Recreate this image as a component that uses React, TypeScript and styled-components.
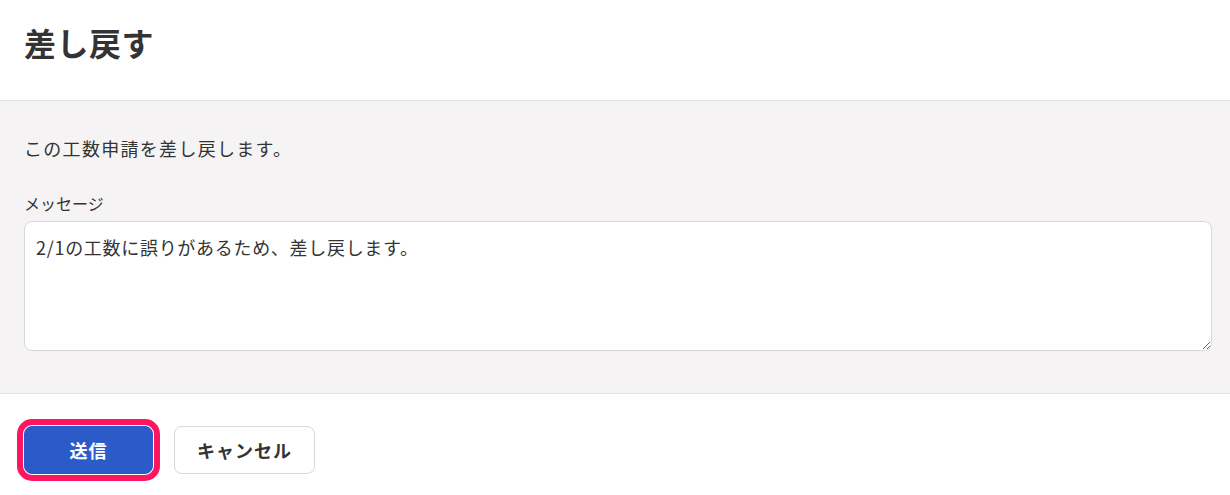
import React from "react";
import styled, { createGlobalStyle } from "styled-components";

const GlobalStyle = createGlobalStyle`
  html, body {
    margin: 0;
    padding: 0;
    background: #ffffff;
  }
  body {
    font-family: "Noto Sans CJK JP", "Noto Sans", sans-serif;
    color: #333333;
  }
  * {
    box-sizing: border-box;
  }
`;

const Dialog = styled.div`
  width: 1230px;
  display: flex;
  flex-direction: column;
`;

const Header = styled.header`
  height: 101px;
  padding: 18px 24px 0;
  border-bottom: 1px solid #e3e1e1;
`;

const Title = styled.h2`
  margin: 0;
  font-size: 32px;
  line-height: 48px;
  font-weight: 700;
  letter-spacing: 0.5px;
  color: #333333;
`;

const Body = styled.section`
  background: #f5f3f3;
  padding: 33px 18px 42px 24px;
  border-bottom: 1px solid #e3e1e1;
  display: flex;
  flex-direction: column;
`;

const Lead = styled.p`
  margin: 0;
  font-size: 18px;
  letter-spacing: 1.3px;
  line-height: 28px;
`;

const Label = styled.label`
  margin-top: 29px;
  font-size: 16px;
  line-height: 24px;
`;

const Message = styled.textarea`
  margin-top: 6px;
  height: 130px;
  width: 100%;
  padding: 11px 11px;
  border: 1px solid #d9d7d7;
  border-radius: 8px;
  background: #ffffff;
  color: #333333;
  font-family: "Noto Sans CJK JP", "Noto Sans", sans-serif;
  font-size: 18px;
  letter-spacing: 0.7px;
  line-height: 28px;
  outline: none;
`;

const Footer = styled.footer`
  padding: 32px 24px;
  display: flex;
  gap: 21px;
`;

const Button = styled.button<{ $primary?: boolean; $marked?: boolean }>`
  height: 48px;
  min-width: 129px;
  padding: 0 22px;
  border-radius: 8px;
  border: 1px solid ${(p) => (p.$primary ? "#2a5bc9" : "#d9d7d7")};
  background: ${(p) => (p.$primary ? "#2a5bc9" : "#ffffff")};
  color: ${(p) => (p.$primary ? "#ffffff" : "#333333")};
  font-family: "Noto Sans CJK JP", "Noto Sans", sans-serif;
  font-size: 18px;
  letter-spacing: 1px;
  font-weight: 700;
  ${(p) =>
    p.$marked &&
    `
    outline: 6px solid #ff1560;
    outline-offset: 1px;
  `}
`;

export default function App() {
  return (
    <>
      <GlobalStyle />
      <Dialog>
        <Header>
          <Title>差し戻す</Title>
        </Header>
        <Body>
          <Lead>この工数申請を差し戻します。</Lead>
          <Label htmlFor="message">メッセージ</Label>
          <Message
            id="message"
            defaultValue="2/1の工数に誤りがあるため、差し戻します。"
          />
        </Body>
        <Footer>
          <Button $primary $marked>
            送信
          </Button>
          <Button>キャンセル</Button>
        </Footer>
      </Dialog>
    </>
  );
}
